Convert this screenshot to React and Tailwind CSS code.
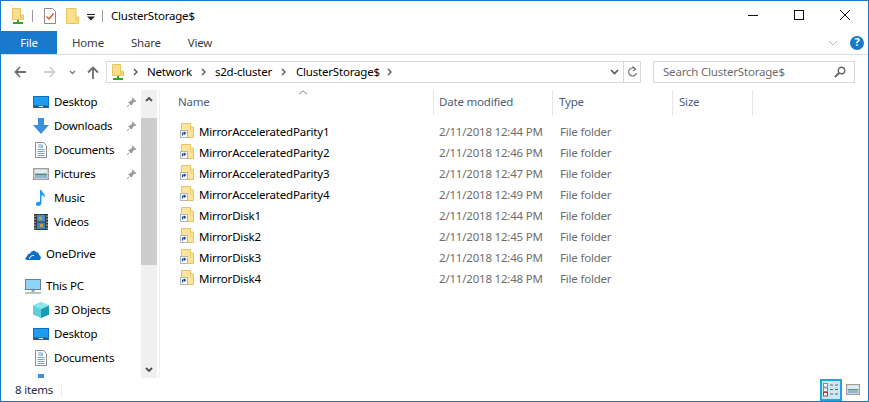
import React from 'react';

const FONT = { fontFamily: '"Noto Sans", "Open Sans", sans-serif' };

const files = [
	['MirrorAcceleratedParity1', '2/11/2018 12:44 PM'],
	['MirrorAcceleratedParity2', '2/11/2018 12:46 PM'],
	['MirrorAcceleratedParity3', '2/11/2018 12:47 PM'],
	['MirrorAcceleratedParity4', '2/11/2018 12:49 PM'],
	['MirrorDisk1', '2/11/2018 12:44 PM'],
	['MirrorDisk2', '2/11/2018 12:45 PM'],
	['MirrorDisk3', '2/11/2018 12:46 PM'],
	['MirrorDisk4', '2/11/2018 12:48 PM'],
];

// Icons
const NetFolder = () => (
	<svg width="12" height="16" viewBox="0 0 12 16" className="shrink-0">
		<path d="M0.5 0.5H8.5V7H11.5V11.5H0.5Z" fill="#fbe08c" stroke="#e8c562" />
		<path d="M8.5 7V9.5H11.5" fill="none" stroke="#e8c562" />
		<rect x="5" y="12" width="2" height="2" fill="#2ea52e" />
		<rect x="1" y="14" width="10" height="2" fill="#2ea52e" />
	</svg>
);

const PlainFolder = () => (
	<svg width="13" height="16" viewBox="0 0 13 16" className="shrink-0">
		<path d="M0.5 0.5H10V9H12.5V15.5H0.5Z" fill="#fbe08c" stroke="#e8c562" />
		<path d="M10 9V12.5H12.5" fill="none" stroke="#e8c562" />
	</svg>
);

const CheckDoc = () => (
	<svg width="12" height="16" viewBox="0 0 12 16" className="shrink-0">
		<path d="M0.5 0.5H8.5L11.5 3.5V15.5H0.5Z" fill="#fff" stroke="#8a8a8a" />
		<path d="M2.5 8.5L5 11L9.5 5.5" fill="none" stroke="#d9542b" strokeWidth="1.4" />
	</svg>
);

const ShortcutFolder = () => (
	<svg width="14" height="15" viewBox="0 0 14 15" className="-mt-[2px] shrink-0">
		<path d="M1.5 0.5H10.5V4H13.5V14.5H1.5Z" fill="#fde69c" stroke="#e6c260" />
		<path d="M10.5 4V8H13.5" fill="none" stroke="#eed07c" />
		<rect x="0.5" y="7.5" width="7" height="7" fill="#fff" stroke="#b5b5b5" />
		<path d="M2.5 12.5V10H5M3.8 9L5.5 10L3.8 11.5" fill="none" stroke="#1b4f9c" strokeWidth="1.2" />
	</svg>
);

const Pin = () => (
	<svg width="11" height="11" viewBox="0 0 11 11">
		<path d="M6.5 0.5L10.5 4.5L9.5 5L8 4.8L6.2 7.6L6 9L2 5L3.4 4.8L6.2 3L6 1.5Z" fill="#9a9a9a" />
		<path d="M3.5 7.5L0.8 10.2" stroke="#9a9a9a" />
	</svg>
);

const DesktopIcon = () => (
	<svg width="16" height="12" viewBox="0 0 16 12">
		<rect x="0.5" y="0.5" width="15" height="11" fill="#1f9bf0" stroke="#0f6cb8" />
		<rect x="1" y="9.5" width="14" height="2" fill="#0d5fa6" />
		<rect x="6" y="10" width="4" height="1" fill="#e8f4ff" />
	</svg>
);

const DownloadIcon = () => (
	<svg width="16" height="16" viewBox="0 0 16 16">
		<path d="M5 0H11V7H16L8 16L0 7H5Z" fill="#3b8fdc" />
	</svg>
);

const DocumentIcon = () => (
	<svg width="12" height="16" viewBox="0 0 12 16">
		<path d="M0.5 0.5H8.5L11.5 3.5V15.5H0.5Z" fill="#fff" stroke="#8c8c8c" />
		<path d="M3 3H6M3 5H6M2.5 7.5H9.5M2.5 9.5H9.5M2.5 11.5H9.5M2.5 13.5H9.5" stroke="#7d9fc4" />
		<path d="M7 2.5V6" stroke="#2d7dd2" />
	</svg>
);

const PictureIcon = ({ width = 16, height = 12 }) => (
	<svg width={width} height={height} viewBox="0 0 16 12" preserveAspectRatio="none">
		<rect x="0.75" y="0.75" width="14.5" height="10.5" fill="#fff" stroke="#a0a0a0" strokeWidth="1.5" />
		<rect x="2" y="2" width="12" height="3.5" fill="#dcedf6" />
		<rect x="2" y="5.5" width="12" height="1.5" fill="#5d8a78" />
		<rect x="2" y="7" width="12" height="3" fill="#8fb4cf" />
	</svg>
);

const MusicIcon = () => (
	<svg width="12" height="16" viewBox="0 0 12 16">
		<path d="M5 0H6.5C7 3 11 4 10 8C9.5 6 8 5.5 6.5 5V13C6.5 15 4.5 16 3 16C1.5 16 0.5 15 1 13.5C1.5 12 3.5 11.5 5 12Z" fill="#1e9bf0" />
	</svg>
);

const VideoIcon = () => (
	<svg width="14" height="16" viewBox="0 0 14 16">
		<rect x="0" y="0" width="14" height="16" fill="#3a3a3a" />
		<rect x="3" y="1" width="8" height="6.5" fill="#4d90c9" />
		<rect x="3" y="8.5" width="8" height="6.5" fill="#3f86c4" />
		<rect x="5" y="3" width="3" height="3" fill="#c9a227" />
		<rect x="6" y="10" width="3" height="3" fill="#c9a227" />
		<path d="M1 1.5V15M13 1.5V15" stroke="#ddd" strokeDasharray="1.5 1.5" />
	</svg>
);

const CloudIcon = () => (
	<svg width="16" height="11" viewBox="0 0 16 11">
		<path d="M1.5 11C0 10.5 0 8 2 7.5C2.5 5 4 4.5 5 4.8C6 1.5 10 0.5 11.5 3.5C13 3 14 4 14 6C16 6.5 16.5 10 14.5 11Z" fill="#0f6fc6" />
		<path d="M4.5 10C5 7 7 6 9 6.5" fill="none" stroke="#fff" />
	</svg>
);

const PcIcon = () => (
	<svg width="16" height="15" viewBox="0 0 16 15">
		<rect x="0.5" y="0.5" width="15" height="10" fill="#8fd3f7" stroke="#6b7f8e" />
		<rect x="6.5" y="11" width="3" height="2" fill="#9aa5ad" />
		<rect x="0" y="13" width="16" height="2" fill="#b9c2c9" />
	</svg>
);

const CubeIcon = () => (
	<svg width="16" height="16" viewBox="0 0 16 16">
		<path d="M8 0L16 3.5V12.5L8 16L0 12.5V3.5Z" fill="#5cd0dc" />
		<path d="M8 7L16 3.5V12.5L8 16Z" fill="#1a9bb5" />
		<path d="M8 0L16 3.5L8 7L0 3.5Z" fill="#8fe3ea" />
	</svg>
);

const navTop = [
	['Desktop', DesktopIcon],
	['Downloads', DownloadIcon],
	['Documents', DocumentIcon],
	['Pictures', PictureIcon],
];

const NavRow = ({ icon: Icon, label, pin, indent = 'pl-[32px]' }) => (
	<div className={`flex h-6 shrink-0 items-center ${indent}`}>
		<span className="flex w-4 shrink-0 items-center justify-center">
			<Icon />
		</span>
		<span className="ml-[5px] text-[#000]">{label}</span>
		{pin && (
			<span className="ml-auto mr-[4px] flex">
				<Pin />
			</span>
		)}
	</div>
);

const Chevron = ({ className = '' }) => (
	<svg width="5" height="8" viewBox="0 0 5 8" className={`shrink-0 ${className}`}>
		<path d="M1 1L4 4L1 7" fill="none" stroke="#555" strokeWidth="1.4" />
	</svg>
);

const App = () => {
	return (
		<div className="flex h-[402px] w-[869px] flex-col overflow-hidden border border-[#1979ca] bg-white text-[11.5px] tracking-[-0.2px] text-black" style={FONT}>
			{/* Title bar */}
			<div className="flex h-[30px] shrink-0 items-center">
				<span className="ml-[11px] flex"><NetFolder /></span>
				<span className="ml-[8px] h-[12px] w-px bg-[#9a9a9a]" />
				<span className="ml-[11px] flex"><CheckDoc /></span>
				<span className="ml-[10px] flex"><PlainFolder /></span>
				<svg width="8" height="7" viewBox="0 0 8 7" className="ml-[8px] mt-[2px]">
					<path d="M0 0H8V1H0ZM0 2.5H8L4 6.5Z" fill="#222" />
				</svg>
				<span className="ml-[7px] h-[12px] w-px bg-[#9a9a9a]" />
				<span className="ml-[8px]">ClusterStorage$</span>
				<div className="ml-auto flex h-full items-center">
					<svg width="46" height="30" viewBox="0 0 46 30"><path d="M18 14.5H28" stroke="#111" /></svg>
					<svg width="46" height="30" viewBox="0 0 46 30"><rect x="18.5" y="9.5" width="9" height="9" fill="none" stroke="#111" /></svg>
					<svg width="46" height="30" viewBox="0 0 46 30"><path d="M18 9L28 19M28 9L18 19" stroke="#111" /></svg>
				</div>
			</div>

			{/* Ribbon tabs */}
			<div className="flex h-[24px] shrink-0 items-center border-b border-[#dadbdc]">
				<div className="flex h-full w-[56px] items-center justify-center bg-[#1979ca] text-white">File</div>
				<div className="ml-[15px] text-[#3b3b3b]">Home</div>
				<div className="ml-[27px] text-[#3b3b3b]">Share</div>
				<div className="ml-[27px] text-[#3b3b3b]">View</div>
				<svg width="10" height="6" viewBox="0 0 10 6" className="ml-auto mr-[12px]">
					<path d="M1 1L5 5L9 1" fill="none" stroke="#b5b5b5" />
				</svg>
				<span className="mr-[4px] flex h-[14px] w-[14px] items-center justify-center rounded-full bg-[#1979ca] text-[11px] font-bold text-white">?</span>
			</div>

			{/* Address row */}
			<div className="flex h-[35px] shrink-0 items-start pt-[6px]">
				<svg width="12" height="12" viewBox="0 0 12 12" className="ml-[13px] mt-[5px]">
					<path d="M6 1L1.5 6L6 11M2 6H12" fill="none" stroke="#6d6d6d" strokeWidth="1.8" />
				</svg>
				<svg width="12" height="12" viewBox="0 0 12 12" className="ml-[18px] mt-[5px]">
					<path d="M6 1L10.5 6L6 11M10 6H0" fill="none" stroke="#cfcfcf" strokeWidth="1.8" />
				</svg>
				<svg width="7" height="5" viewBox="0 0 7 5" className="ml-[13px] mt-[9px]">
					<path d="M1 1L3.5 3.5L6 1" fill="none" stroke="#777" strokeWidth="1.3" />
				</svg>
				<svg width="12" height="13" viewBox="0 0 12 13" className="ml-[11px] mt-[5px]">
					<path d="M1 6.5L6 1.5L11 6.5M6 2V13" fill="none" stroke="#6d6d6d" strokeWidth="1.8" />
				</svg>
				<div className="ml-[7px] flex h-[22px] w-[518px] items-center border border-[#d9d9d9]">
					<span className="ml-[5px] flex"><NetFolder /></span>
					<Chevron className="ml-[9px]" />
					<span className="ml-[9px]">Network</span>
					<Chevron className="ml-[9px]" />
					<span className="ml-[9px]">s2d-cluster</span>
					<Chevron className="ml-[9px]" />
					<span className="ml-[10px]">ClusterStorage$</span>
					<Chevron className="ml-[7px]" />
					<svg width="9" height="6" viewBox="0 0 9 6" className="ml-auto mr-[4px]">
						<path d="M1 1L4.5 4.5L8 1" fill="none" stroke="#555" strokeWidth="1.6" />
					</svg>
				</div>
				<div className="flex h-[22px] w-[17px] items-center justify-center border border-l-0 border-[#d9d9d9]">
					<svg width="11" height="12" viewBox="0 0 11 12">
						<path d="M8.5 3.2A4 4 0 1 0 9.5 7M5.5 0.5L8.7 3.2L5.8 5" fill="none" stroke="#777" strokeWidth="1.2" />
					</svg>
				</div>
				<div className="ml-[12px] flex h-[22px] w-[202px] items-center border border-[#d9d9d9] pl-[9px] text-[#6d6d6d]">
					<span>Search ClusterStorage$</span>
					<svg width="12" height="12" viewBox="0 0 12 12" className="ml-auto mr-[8px]">
						<circle cx="7.5" cy="4.5" r="3.2" fill="none" stroke="#666" strokeWidth="1.4" />
						<path d="M5 7L1 11" stroke="#666" strokeWidth="2" />
					</svg>
				</div>
			</div>

			{/* Body */}
			<div className="flex min-h-0 flex-1">
				{/* Navigation pane */}
				<div className="flex w-[140px] shrink-0 flex-col overflow-hidden">
					{navTop.map(([label, icon]) => (
						<NavRow key={label} icon={icon} label={label} pin />
					))}
					<NavRow icon={MusicIcon} label="Music" />
					<NavRow icon={VideoIcon} label="Videos" />
					<div className="h-2 shrink-0" />
					<NavRow icon={CloudIcon} label="OneDrive" indent="pl-[24px]" />
					<div className="h-2 shrink-0" />
					<NavRow icon={PcIcon} label="This PC" indent="pl-[24px]" />
					<NavRow icon={CubeIcon} label="3D Objects" />
					<NavRow icon={DesktopIcon} label="Desktop" />
					<NavRow icon={DocumentIcon} label="Documents" />
					<NavRow icon={DownloadIcon} label="Downloads" />
				</div>

				{/* Scrollbar */}
				<div className="flex w-[16px] shrink-0 flex-col bg-[#f0f0f0]">
					<div className="flex h-[17px] items-center justify-center">
						<svg width="8" height="6" viewBox="0 0 8 6"><path d="M1 5L4 2L7 5" fill="none" stroke="#505050" strokeWidth="1.8" /></svg>
					</div>
					<div className="mt-[11px] h-[147px] bg-[#cdcdcd]" />
					<div className="flex-1" />
					<div className="flex h-[17px] items-center justify-center">
						<svg width="8" height="6" viewBox="0 0 8 6"><path d="M1 1L4 4L7 1" fill="none" stroke="#505050" strokeWidth="1.8" /></svg>
					</div>
				</div>
				<div className="ml-[2px] w-px shrink-0 bg-[#f0f0f0]" />

				{/* File list */}
				<div className="relative min-w-0 flex-1">
					<svg width="10" height="5" viewBox="0 0 10 5" className="absolute left-[138px] top-0">
						<path d="M1 4L5 1L9 4" fill="none" stroke="#8a8a8a" />
					</svg>
					<div className="flex h-[25px] text-[#4c607a]">
						<div className="flex w-[274px] items-center border-r border-[#e5e5e5] pb-[2px] pl-[18px]">Name</div>
						<div className="flex w-[119px] items-center border-r border-[#e5e5e5] pb-[2px] pl-[5px]">Date modified</div>
						<div className="flex w-[120px] items-center border-r border-[#e5e5e5] pb-[2px] pl-[6px]">Type</div>
						<div className="flex w-[80px] items-center border-r border-[#e5e5e5] pb-[2px] pl-[6px]">Size</div>
					</div>
					<div className="mt-[6px] flex flex-col">
						{files.map(([name, date]) => (
							<div key={name} className="flex h-[21px] items-center">
								<div className="flex w-[274px] items-center pl-[20px]">
									<ShortcutFolder />
									<span className="ml-[5px]">{name}</span>
								</div>
								<div className="w-[119px] pl-[5px] text-[#6d6d6d]">{date}</div>
								<div className="pl-[7px] text-[#6d6d6d]">File folder</div>
							</div>
						))}
					</div>
				</div>
			</div>

			{/* Status bar */}
			<div className="flex h-[23px] shrink-0 items-center">
				<span className="ml-[14px] text-[#1e2a4a]">8 items</span>
				<span className="ml-[8px] h-[14px] w-px bg-[#ececec]" />
				<div className="ml-auto flex h-[22px] w-[22px] items-center justify-center border-2 border-[#26a0da] bg-[#cbe8f6]">
					<svg width="16" height="14" viewBox="0 0 16 14">
						<rect x="0.5" y="0.5" width="4" height="3.5" fill="#fff" stroke="#888" />
						<rect x="0.5" y="5" width="4" height="3.5" fill="#fff" stroke="#888" />
						<rect x="0.5" y="9.5" width="4" height="3.5" fill="#fff" stroke="#c0392b" />
						<path d="M7 2H10M12 2H15M7 6.5H10M12 6.5H15M7 11H10M12 11H15" stroke="#666" />
					</svg>
				</div>
				<span className="ml-[4px] mr-[8px] flex"><PictureIcon width={14} height={11} /></span>
			</div>
		</div>
	);
};

export default App;
